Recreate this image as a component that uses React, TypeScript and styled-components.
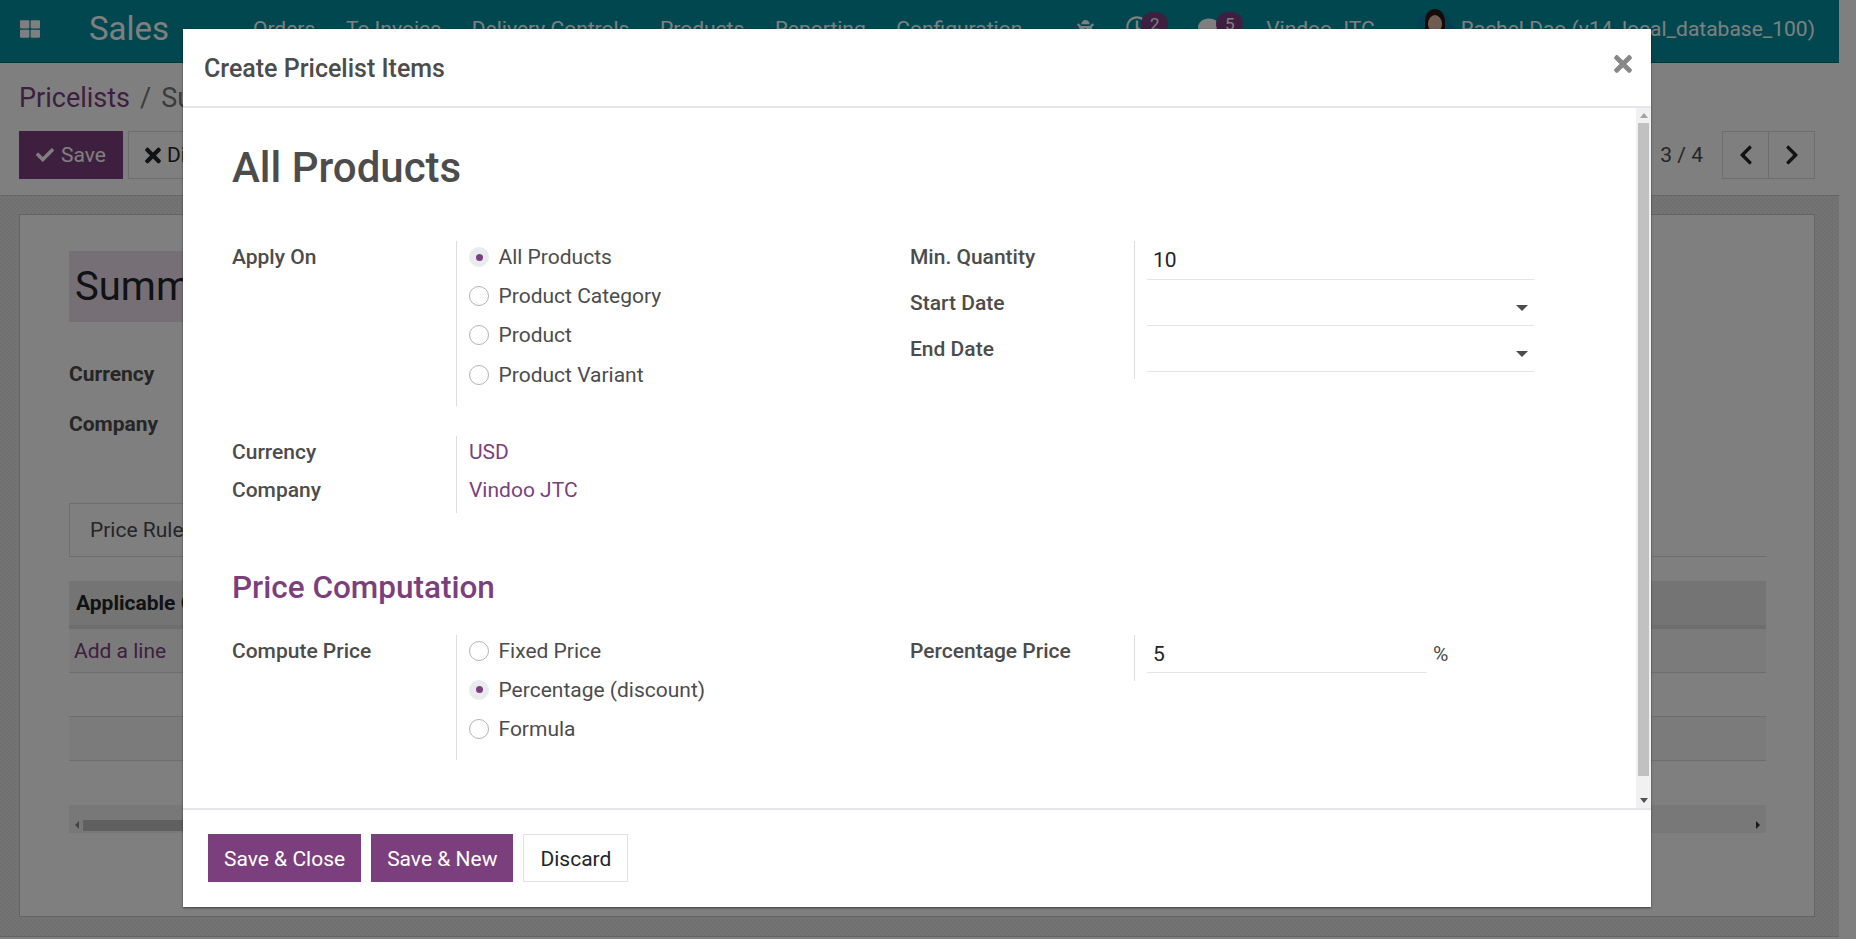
import React from "react";
import styled, { createGlobalStyle } from "styled-components";
import { FaThLarge, FaCheck, FaTimes, FaChevronLeft, FaChevronRight, FaBug, FaRegClock, FaComment } from "react-icons/fa";

const Global = createGlobalStyle`
  html, body { margin: 0; padding: 0; background: #fff; }
  body { font-family: Roboto, "Liberation Sans", sans-serif; color: #4c4c4c; }
  * { box-sizing: border-box; }
`;

const purple = "#7c3f7e";

const Screen = styled.div`
  position: relative;
  width: 1856px;
  height: 939px;
  overflow: hidden;
  background: #fff;
`;
const Page = styled.div`
  width: 1839px;
  height: 939px;
  display: flex;
  flex-direction: column;
`;
const NavBar = styled.header`
  flex: 0 0 63px;
  background: #008f9e;
  border-bottom: 1px solid #006f7a;
  display: flex;
  align-items: flex-start;
  color: #fff;
  padding-left: 20px;
`;
const AppsIcon = styled(FaThLarge)`
  width: 20px;
  height: 20px;
  margin-top: 19px;
`;
const Brand = styled.span`
  font-size: 33px;
  line-height: 58px;
  margin-left: 49px;
  width: 164px;
`;
const NavMenu = styled.nav`
  display: flex;
  gap: 30.6px;
  font-size: 21px;
  line-height: 58px;
  height: 58px;
`;
const NavTools = styled.div`
  margin-left: auto;
  display: flex;
  align-items: flex-start;
  padding-right: 24px;
  font-size: 21px;
  line-height: 58px;
`;
const ToolIcon = styled.span<{ $top: number; $size: number }>`
  display: flex;
  width: ${(p) => p.$size}px;
  height: ${(p) => p.$size}px;
  margin-top: ${(p) => p.$top}px;
  svg { width: 100%; height: 100%; }
`;
const BugIcon = styled(ToolIcon)`
  margin-right: 31px;
`;
const Badge = styled.span<{ $left: number; $right: number }>`
  width: 27px;
  height: 24px;
  margin-top: 12px;
  margin-left: ${(p) => p.$left}px;
  margin-right: ${(p) => p.$right}px;
  border-radius: 12px;
  background: ${purple};
  font-size: 17px;
  line-height: 24px;
  text-align: center;
`;
const Company1 = styled.span`
  margin-right: 42px;
`;
const Avatar = styled.svg`
  width: 36px;
  height: 40px;
  margin-top: 8px;
  margin-right: 8px;
`;

const ControlPanel = styled.section`
  flex: 0 0 133px;
  background: #fff;
  border-bottom: 1px solid #ccc;
  padding: 15px 24px 0 19px;
  display: flex;
  flex-direction: column;
`;
const Crumbs = styled.div`
  font-size: 27px;
  line-height: 40px;
  height: 53px;
  color: #777;
`;
const CrumbLink = styled.span`
  color: ${purple};
  margin-right: 10px;
`;
const CrumbSep = styled.span`
  margin-right: 10px;
`;
const PanelRow = styled.div`
  display: flex;
  align-items: center;
  height: 48px;
`;
const SaveBtn = styled.div`
  width: 104px;
  height: 48px;
  background: ${purple};
  color: #fff;
  font-size: 21px;
  display: flex;
  align-items: center;
  justify-content: center;
  gap: 7px;
  svg { width: 18px; height: 18px; }
`;
const DiscardBtn = styled.div`
  margin-left: 5px;
  width: 130px;
  height: 48px;
  border: 1px solid #ddd;
  color: #212529;
  font-size: 21px;
  display: flex;
  align-items: center;
  padding-left: 16px;
  gap: 6px;
  svg { width: 16px; height: 23px; }
`;
const Pager = styled.span`
  margin-left: auto;
  font-size: 21px;
  color: #4c4c4c;
  margin-right: 20px;
`;
const PagerBtn = styled.div`
  width: 47px;
  height: 48px;
  border: 1px solid #ddd;
  margin-left: -1px;
  display: flex;
  align-items: center;
  justify-content: center;
  color: #212529;
  svg { width: 22px; height: 22px; }
`;

const SheetBg = styled.main`
  flex: 1;
  padding: 18px 24px 19px 19px;
  border-bottom: 1px solid #ccc;
  margin-bottom: 3px;
  background-color: #e6e6e6;
  background-image: repeating-conic-gradient(#e0e0e0 0 25%, #e9e9e9 0 50%);
  background-size: 4px 4px;
`;
const Sheet = styled.div`
  height: 703px;
  background: #fff;
  border: 1px solid #c8c8c8;
  padding: 36px 48px 0 49px;
`;
const TitleBox = styled.div`
  width: 340px;
  height: 71px;
  background: #ece1ed;
  font-size: 40px;
  line-height: 71px;
  color: #212529;
  padding-left: 6px;
`;
const SheetLabel = styled.div<{ $top: number }>`
  font-size: 21px;
  font-weight: 700;
  line-height: 24px;
  margin-top: ${(p) => p.$top}px;
`;
const TabStrip = styled.div`
  margin-top: 67px;
  height: 54px;
  border-bottom: 1px solid #ddd;
`;
const Tab = styled.div`
  width: 220px;
  height: 54px;
  border: 1px solid #ddd;
  border-bottom: 0;
  padding-left: 20px;
  font-size: 21px;
  line-height: 52px;
`;
const TableHead = styled.div`
  margin-top: 24px;
  height: 48px;
  background: #e9e9e9;
  border-bottom: 4px solid #dcdcdc;
  padding-left: 7px;
  font-size: 21px;
  font-weight: 700;
  line-height: 44px;
  color: #212529;
`;
const TableRow = styled.div<{ $alt?: boolean }>`
  height: 44px;
  border-bottom: 1px solid #ddd;
  background: ${(p) => (p.$alt ? "#f6f6f6" : "#fff")};
  padding-left: 5px;
  font-size: 21px;
  line-height: 44px;
  color: ${purple};
`;
const HScroll = styled.div`
  margin-top: 44px;
  height: 28px;
  background: #f1f1f1;
  display: flex;
  align-items: center;
  padding: 12px 6px 0 6px;
  gap: 2px;
`;
const HThumb = styled.div`
  width: 700px;
  height: 11px;
  background: #c1c1c1;
  margin-left: 2px;
`;
const HArrowL = styled.span`
  border-style: solid;
  border-width: 4px 4px 4px 0;
  border-color: transparent #888 transparent transparent;
`;
const HArrowR = styled.span`
  margin-left: auto;
  border-style: solid;
  border-width: 4px 0 4px 4px;
  border-color: transparent transparent transparent #333;
`;

const Backdrop = styled.div`
  position: absolute;
  inset: 0;
  background: rgba(0, 0, 0, 0.5);
`;
const Modal = styled.div`
  position: absolute;
  left: 183px;
  top: 29px;
  width: 1468px;
  height: 878px;
  background: #fff;
  display: flex;
  flex-direction: column;
  box-shadow: 0 1px 2px rgba(0, 0, 0, 0.5);
`;
const ModalHeader = styled.div`
  flex: 0 0 79px;
  border-bottom: 2px solid #e3e5e8;
  display: flex;
  align-items: flex-start;
  justify-content: space-between;
  padding: 21px 19px 0 21px;
`;
const ModalTitle = styled.h4`
  margin: 0;
  font-size: 25px;
  font-weight: 500;
  line-height: 38px;
  color: #4c4c4c;
`;
const CloseIcon = styled(FaTimes)`
  width: 18px;
  height: 26px;
  margin-top: 1px;
  color: #888;
`;
const ModalMiddle = styled.div`
  flex: 1;
  display: flex;
  min-height: 0;
`;
const Content = styled.div`
  flex: 1;
  overflow: hidden;
  padding: 31px 0 0 49px;
`;
const ScrollTrack = styled.div`
  flex: 0 0 15px;
  background: #f1f1f1;
  display: flex;
  flex-direction: column;
  align-items: center;
`;
const ArrowCell = styled.div`
  flex: 0 0 15px;
  display: flex;
  align-items: center;
  justify-content: center;
  width: 15px;
`;
const ArrowUp = styled.span`
  border-style: solid;
  border-width: 0 4px 5px 4px;
  border-color: transparent transparent #a3a3a3 transparent;
`;
const ArrowDown = styled.span`
  border-style: solid;
  border-width: 5px 4px 0 4px;
  border-color: #505050 transparent transparent transparent;
`;
const ScrollThumb = styled.div`
  width: 11px;
  height: 653px;
  background: #c1c1c1;
  margin-bottom: 17px;
`;
const Heading = styled.h1`
  margin: 0 0 44px;
  font-size: 42px;
  font-weight: 500;
  line-height: 58px;
  color: #4c4c4c;
`;
const SubHeading = styled.h2`
  margin: 55px 0 27px;
  font-size: 31.5px;
  font-weight: 500;
  line-height: 40px;
  color: ${purple};
`;
const Columns = styled.div`
  display: grid;
  grid-template-columns: 678px 1fr;
  align-items: start;
`;
const FieldGroup = styled.div`
  display: grid;
  grid-template-columns: 224px 1fr;
`;
const SideGrid = styled.div`
  display: grid;
  grid-template-columns: 224px 405px;
`;
const Label = styled.div`
  font-size: 21px;
  font-weight: 500;
  line-height: 20px;
  padding-top: 6px;
  color: #4c4c4c;
`;
const OptionList = styled.div`
  border-left: 1px solid #ddd;
  padding: 6px 0 21px 12px;
  display: flex;
  flex-direction: column;
  gap: 19.2px;
`;
const Option = styled.div`
  display: flex;
  align-items: center;
  gap: 9.5px;
  height: 20px;
  font-size: 21px;
  line-height: 20px;
`;
const Radio = styled.span<{ $on?: boolean }>`
  width: 20px;
  height: 20px;
  border-radius: 50%;
  border: 1px solid ${(p) => (p.$on ? "#e9ecef" : "#adb5bd")};
  background: ${(p) => (p.$on ? "#e9ecef" : "#fff")};
  display: flex;
  align-items: center;
  justify-content: center;
  &::after {
    content: "";
    width: 7px;
    height: 7px;
    border-radius: 50%;
    background: ${(p) => (p.$on ? purple : "transparent")};
  }
`;
const InfoBlock = styled.div`
  margin-top: 30px;
  display: grid;
  grid-template-columns: 224px 1fr;
  width: 678px;
`;
const InfoLabels = styled.div`
  display: flex;
  flex-direction: column;
  gap: 12px;
  padding-bottom: 13px;
`;
const InfoValues = styled.div`
  border-left: 1px solid #ddd;
  padding: 6px 0 13px 12px;
  display: flex;
  flex-direction: column;
  gap: 18px;
`;
const LinkValue = styled.div`
  font-size: 21px;
  line-height: 20px;
  color: ${purple};
`;
const InputCell = styled.div`
  border-left: 1px solid #ddd;
  height: 46px;
  padding-left: 12px;
`;
const ShortCell = styled(InputCell)`
  display: flex;
  align-items: flex-start;
`;
const Input = styled.div<{ $w: number }>`
  width: ${(p) => p.$w}px;
  height: 39px;
  border-bottom: 1px solid #e4e4e4;
  padding: 9px 6px 0 6px;
  font-size: 21px;
  line-height: 20px;
  color: #212529;
  display: flex;
  justify-content: space-between;
`;
const ShortInput = styled(Input)`
  height: 38px;
`;
const Caret = styled.span`
  margin: 9px 0 0 auto;
  border-style: solid;
  border-width: 6px 6.5px 0 6.5px;
  border-color: #4c4c4c transparent transparent transparent;
`;
const Unit = styled.span`
  font-size: 21px;
  line-height: 20px;
  margin: 9px 0 0 6px;
`;
const ModalFooter = styled.div`
  flex: 0 0 99px;
  border-top: 2px solid #e3e5e8;
  padding: 24px 0 0 25px;
  display: flex;
  align-items: flex-start;
  gap: 10px;
`;
const PrimaryButton = styled.button`
  height: 48px;
  padding: 2px 16px 0;
  border: 0;
  background: ${purple};
  color: #fff;
  font: 400 21px Roboto, sans-serif;
`;
const SecondaryButton = styled(PrimaryButton)`
  background: #fff;
  border: 1px solid #dee2e6;
  color: #212529;
`;

const apply = ["All Products", "Product Category", "Product", "Product Variant"];
const compute = ["Fixed Price", "Percentage (discount)", "Formula"];

export default function App() {
  return (
    <Screen>
      <Global />
      <Page>
        <NavBar>
          <AppsIcon />
          <Brand>Sales</Brand>
          <NavMenu>
            {["Orders", "To Invoice", "Delivery Controls", "Products", "Reporting", "Configuration"].map((m) => (
              <span key={m}>{m}</span>
            ))}
          </NavMenu>
          <NavTools>
            <BugIcon $top={20} $size={19}><FaBug /></BugIcon>
            <ToolIcon $top={16} $size={22}><FaRegClock /></ToolIcon>
            <Badge $left={-7} $right={30}>2</Badge>
            <ToolIcon $top={17} $size={22}><FaComment /></ToolIcon>
            <Badge $left={-4} $right={23}>5</Badge>
            <Company1>Vindoo JTC</Company1>
            <Avatar viewBox="0 0 36 40">
              <circle cx="18" cy="20" r="18" fill="#0a7fa8" />
              <path d="M8 40V14C8 5 13 1 18 1s10 4 10 13v26z" fill="#2a1712" />
              <ellipse cx="18" cy="16" rx="7" ry="9" fill="#e2b9a6" />
              <path d="M15 21h6l-3 1.5z" fill="#b5413f" />
            </Avatar>
            <span>Rachel Dao (v14_local_database_100)</span>
          </NavTools>
        </NavBar>
        <ControlPanel>
          <Crumbs>
            <CrumbLink>Pricelists</CrumbLink>
            <CrumbSep>/</CrumbSep>
            <span>Summer</span>
          </Crumbs>
          <PanelRow>
            <SaveBtn><FaCheck />Save</SaveBtn>
            <DiscardBtn><FaTimes />Discard</DiscardBtn>
            <Pager>3 / 4</Pager>
            <PagerBtn><FaChevronLeft /></PagerBtn>
            <PagerBtn><FaChevronRight /></PagerBtn>
          </PanelRow>
        </ControlPanel>
        <SheetBg>
          <Sheet>
            <TitleBox>Summer</TitleBox>
            <SheetLabel $top={40}>Currency</SheetLabel>
            <SheetLabel $top={26}>Company</SheetLabel>
            <TabStrip><Tab>Price Rules</Tab></TabStrip>
            <TableHead>Applicable On</TableHead>
            <TableRow $alt>Add a line</TableRow>
            <TableRow />
            <TableRow $alt />
            <HScroll>
              <HArrowL />
              <HThumb />
              <HArrowR />
            </HScroll>
          </Sheet>
        </SheetBg>
      </Page>
      <Backdrop />
      <Modal>
        <ModalHeader>
          <ModalTitle>Create Pricelist Items</ModalTitle>
          <CloseIcon />
        </ModalHeader>
        <ModalMiddle>
          <Content>
            <Heading>All Products</Heading>
            <Columns>
              <FieldGroup>
                <Label>Apply On</Label>
                <OptionList>
                  {apply.map((o, i) => (
                    <Option key={o}><Radio $on={i === 0} />{o}</Option>
                  ))}
                </OptionList>
              </FieldGroup>
              <SideGrid>
                <Label>Min. Quantity</Label>
                <InputCell><Input $w={387}>10</Input></InputCell>
                <Label>Start Date</Label>
                <InputCell><Input $w={387}><Caret /></Input></InputCell>
                <Label>End Date</Label>
                <InputCell><Input $w={387}><Caret /></Input></InputCell>
              </SideGrid>
            </Columns>
            <InfoBlock>
              <InfoLabels>
                <Label>Currency</Label>
                <Label>Company</Label>
              </InfoLabels>
              <InfoValues>
                <LinkValue>USD</LinkValue>
                <LinkValue>Vindoo JTC</LinkValue>
              </InfoValues>
            </InfoBlock>
            <SubHeading>Price Computation</SubHeading>
            <Columns>
              <FieldGroup>
                <Label>Compute Price</Label>
                <OptionList>
                  {compute.map((o, i) => (
                    <Option key={o}><Radio $on={i === 1} />{o}</Option>
                  ))}
                </OptionList>
              </FieldGroup>
              <SideGrid>
                <Label>Percentage Price</Label>
                <ShortCell>
                  <ShortInput $w={280}>5</ShortInput>
                  <Unit>%</Unit>
                </ShortCell>
              </SideGrid>
            </Columns>
          </Content>
          <ScrollTrack>
            <ArrowCell><ArrowUp /></ArrowCell>
            <ScrollThumb />
            <ArrowCell><ArrowDown /></ArrowCell>
          </ScrollTrack>
        </ModalMiddle>
        <ModalFooter>
          <PrimaryButton>Save &amp; Close</PrimaryButton>
          <PrimaryButton>Save &amp; New</PrimaryButton>
          <SecondaryButton>Discard</SecondaryButton>
        </ModalFooter>
      </Modal>
    </Screen>
  );
}
